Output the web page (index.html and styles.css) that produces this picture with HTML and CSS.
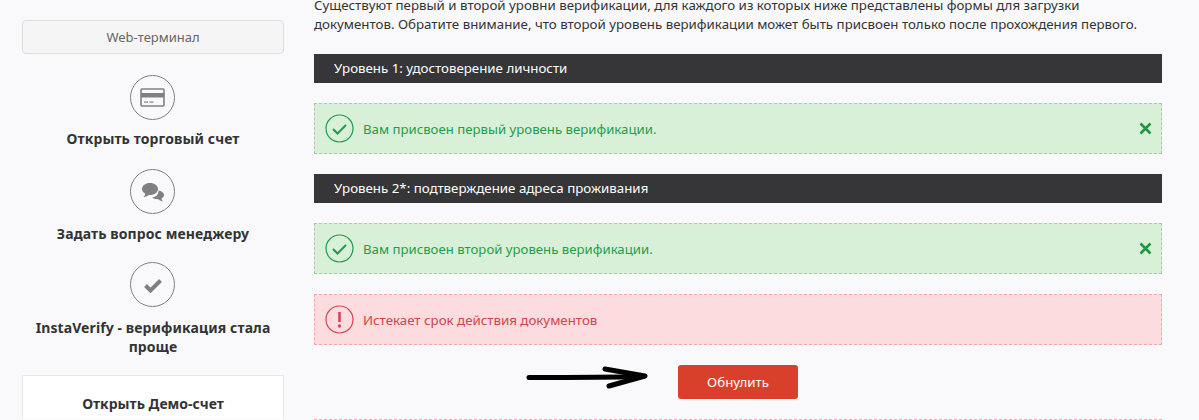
FILE: index.html
```html
<!DOCTYPE html>
<html lang="ru">
<head>
  <meta charset="UTF-8" />
  <title>Верификация</title>
  <link rel="stylesheet" href="styles.css">
</head>
<body>
  <div class="container">
    <div class="sidebar">
      <a class="terminal-btn">Web-терминал</a>

      <div class="side-item first">
        <div class="side-icon">
          <svg width="25" height="20" viewBox="0 0 25 20">
            <rect x="1" y="1" width="23" height="17" rx="1" fill="none" stroke="#808080" stroke-width="1.6"/>
            <rect x="1" y="5" width="23" height="4.5" fill="#808080"/>
            <rect x="4" y="13.5" width="4" height="1.2" fill="#808080"/>
            <rect x="9.5" y="13.5" width="4" height="1.2" fill="#808080"/>
          </svg>
        </div>
        <div class="side-label">Открыть торговый счет</div>
      </div>

      <div class="side-item second">
        <div class="side-icon">
          <svg width="24" height="20" viewBox="0 0 24 20">
            <path d="M17.500 8.500c2.800.6 5.500 2 5.500 4.500 0 1.500-1 2.700-2.500 3.400.1 1 .7 2 1.500 3-2.200-.3-4-1.200-5-2.300-2.500.2-4.500-.5-5.800-1.600 3.800-.3 6.300-3 6.300-7z" fill="#808080"/>
            <path d="M9 1C4.600 1 1 3.600 1 7c0 2 1.300 3.700 3.300 4.800-.2 1.200-.8 2.200-1.800 3.200 2.200-.2 4-1 5.200-2.100.4.100.9.100 1.300.100 4.400 0 8-2.600 8-6S13.400 1 9 1z" fill="#808080"/>
          </svg>
        </div>
        <div class="side-label">Задать вопрос менеджеру</div>
      </div>

      <div class="side-item third">
        <div class="side-icon">
          <svg width="20" height="16" viewBox="0 0 20 16">
            <path d="M2.500 8.500l5 5 10-10" fill="none" stroke="#808080" stroke-width="4"/>
          </svg>
        </div>
        <div class="side-label">InstaVerify - верификация стала проще</div>
      </div>

      <div class="demo-card">Открыть Демо-счет</div>
    </div>

    <div class="content">
      <p class="intro">Существуют первый и второй уровни верификации, для каждого из которых ниже представлены формы для загрузки документов. Обратите внимание, что второй уровень верификации может быть присвоен только после прохождения первого.</p>

      <h3 class="level-title">Уровень 1: удостоверение личности</h3>
      <div class="alert success">
        <svg class="alert-icon" width="29" height="29" viewBox="0 0 29 29">
          <circle cx="14.500" cy="14.500" r="13.500" fill="none" stroke="#1f9d4d" stroke-width="1.200"/>
          <path d="M8 15l4.500 4.500 8.500-8.500" fill="none" stroke="#1f9d4d" stroke-width="2"/>
        </svg>
        <span class="alert-text">Вам присвоен первый уровень верификации.</span>
        <span class="alert-close">
          <svg width="13" height="13" viewBox="0 0 13 13"><path d="M1.500 1.500l10 10M11.500 1.500l-10 10" stroke="#1c9a3f" stroke-width="2.600"/></svg>
        </span>
      </div>

      <h3 class="level-title">Уровень 2*: подтверждение адреса проживания</h3>
      <div class="alert success">
        <svg class="alert-icon" width="29" height="29" viewBox="0 0 29 29">
          <circle cx="14.500" cy="14.500" r="13.500" fill="none" stroke="#1f9d4d" stroke-width="1.200"/>
          <path d="M8 15l4.500 4.500 8.500-8.500" fill="none" stroke="#1f9d4d" stroke-width="2"/>
        </svg>
        <span class="alert-text">Вам присвоен второй уровень верификации.</span>
        <span class="alert-close">
          <svg width="13" height="13" viewBox="0 0 13 13"><path d="M1.500 1.500l10 10M11.500 1.500l-10 10" stroke="#1c9a3f" stroke-width="2.600"/></svg>
        </span>
      </div>

      <div class="alert danger">
        <svg class="alert-icon" width="29" height="29" viewBox="0 0 29 29">
          <circle cx="14.500" cy="14.500" r="13.500" fill="none" stroke="#cf4a50" stroke-width="1.200"/>
          <path d="M14.500 7v10" stroke="#cf4a50" stroke-width="2.600"/>
          <circle cx="14.500" cy="21" r="1.700" fill="#cf4a50"/>
        </svg>
        <span class="alert-text">Истекает срок действия документов</span>
      </div>

      <div class="reset-row">
        <a class="reset-btn">Обнулить</a>
        <svg class="arrow" width="124" height="24" viewBox="0 0 124 24">
          <path d="M3 12.500C40 12.500 80 12.500 116 11.500" fill="none" stroke="#000" stroke-width="5" stroke-linecap="round"/>
          <path d="M79 4L119 11 83 21" fill="none" stroke="#000" stroke-width="5" stroke-linecap="round" stroke-linejoin="round"/>
        </svg>
      </div>

      <div class="next-alert"></div>
    </div>
  </div>
</body>
</html>
```

FILE: styles.css
```css
* {
  box-sizing: border-box;
  margin: 0;
  padding: 0;
}

html, body {
  height: 420px;
  overflow: hidden;
}

body {
  font-family: 'Noto Sans', sans-serif;
  font-size: 13.3px;
  background-color: #f9f9fc;
  color: #333;
}

.container {
  display: flex;
  height: 420px;
  padding-left: 22px;
  overflow: hidden;
}

.sidebar {
  width: 262px;
  padding-top: 20px;
  flex-shrink: 0;
}

.terminal-btn {
  display: block;
  height: 34px;
  line-height: 32px;
  text-align: center;
  font-size: 13px;
  color: #666;
  background: #f5f5f6;
  border: 1px solid #dedede;
  border-radius: 4px;
}

.side-item {
  margin-top: 21px;
  text-align: center;
}

.side-item.second {
  margin-top: 21px;
}

.side-item.third {
  margin-top: 19px;
}

.side-icon {
  width: 45px;
  height: 45px;
  margin-left: 108px;
  border: 1px solid #808080;
  border-radius: 50%;
  display: flex;
  justify-content: center;
  align-items: center;
}

.side-label {
  margin-top: 10px;
  font-size: 14px;
  letter-spacing: 0.1px;
  line-height: 19px;
  font-weight: bold;
  color: #333;
}

.first .side-label {
  margin-top: 9px;
}

.third .side-label {
  margin-top: 11px;
}

.demo-card {
  margin-top: 19px;
  height: 44px;
  padding-top: 18px;
  text-align: center;
  font-size: 14px;
  font-weight: bold;
  line-height: 19px;
  background: #fff;
  border: 1px solid #e8e8e8;
  border-bottom: none;
}

.content {
  width: 848px;
  margin-left: 30px;
  margin-top: -4px;
}

.intro {
  line-height: 19px;
  height: 38px;
  color: #333;
}

.level-title {
  margin-top: 20px;
  height: 29px;
  line-height: 29px;
  padding-left: 20px;
  font-size: 13.3px;
  font-weight: normal;
  color: #fff;
  background: #363638;
}

.alert {
  margin-top: 20px;
  height: 51px;
  padding: 0 10px;
  display: flex;
  align-items: center;
}

.alert-icon {
  margin-right: 9px;
  flex-shrink: 0;
}

.alert-text {
  flex: 1;
}

.alert-close {
  display: flex;
  margin-right: -1px;
}

.success {
  color: #1f9d4d;
  font-size: 13.2px;
  background: #d9f0d8;
  border: 1px dashed #a3cfa6;
}

.danger {
  color: #c9474e;
  background: #fcdcde;
  border: 1px dashed #f0aab0;
}

.reset-row {
  position: relative;
  margin-top: 20px;
  display: flex;
  justify-content: center;
}

.reset-btn {
  display: block;
  width: 120px;
  height: 34px;
  line-height: 34px;
  text-align: center;
  color: #fff;
  background: #d8402c;
  border-radius: 3px;
}

.arrow {
  position: absolute;
  left: 212px;
  top: 0;
}

.next-alert {
  margin-top: 20px;
  border-top: 1px dashed #f0aab0;
}
```
